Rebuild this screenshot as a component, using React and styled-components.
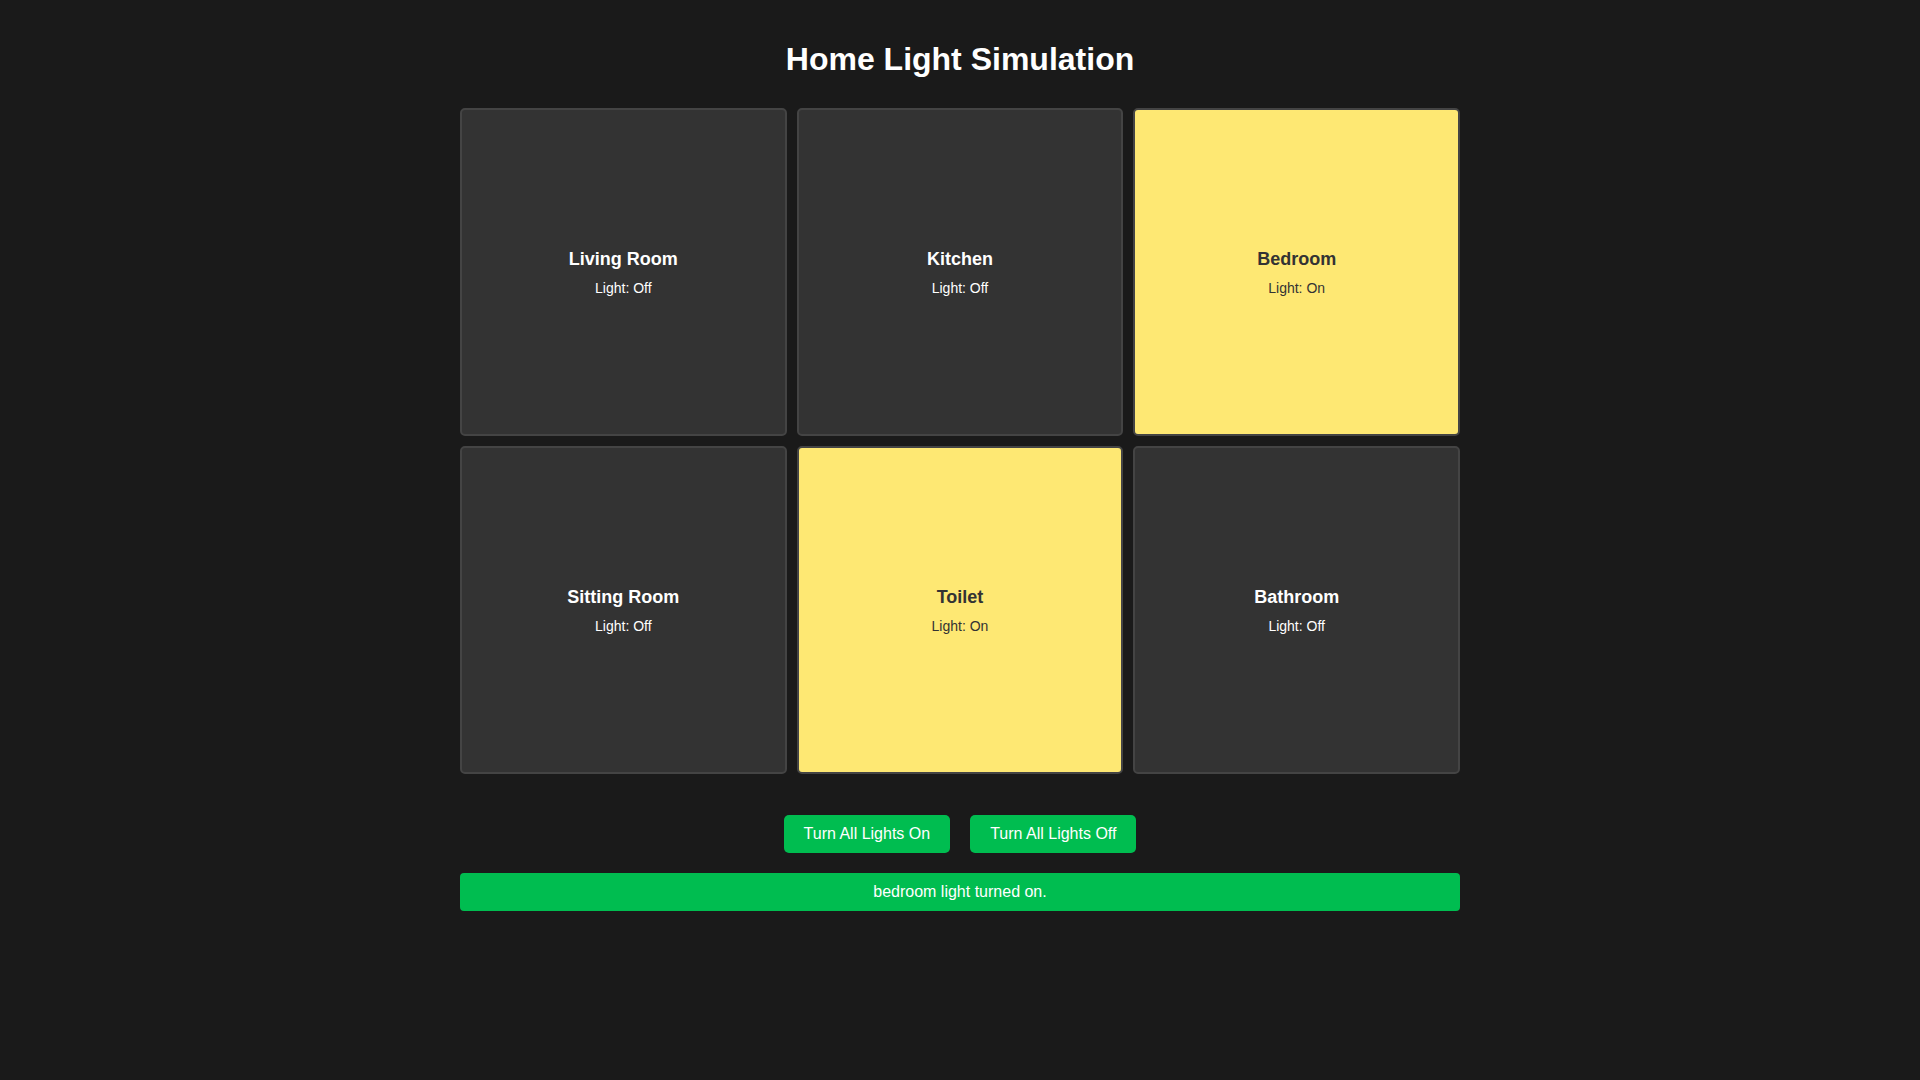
import React, { useState } from "react";
import styled, { createGlobalStyle } from "styled-components";

const GlobalStyle = createGlobalStyle`
  body {
    margin: 0;
    background-color: #1a1a1a;
    font-family: "Liberation Sans", Arial, sans-serif;
    color: #fff;
  }
`;

const Page = styled.div`
  display: flex;
  flex-direction: column;
  align-items: center;
  padding: 20px 0;
`;

const Title = styled.h1`
  font-size: 32px;
  font-weight: bold;
  margin: 21px 0 30px;
  color: #fff;
`;

const RoomGrid = styled.div`
  display: grid;
  grid-template-columns: repeat(3, 1fr);
  gap: 10px;
  width: 1000px;
`;

const RoomCard = styled.div`
  box-sizing: border-box;
  height: 328px;
  display: flex;
  flex-direction: column;
  align-items: center;
  justify-content: center;
  background-color: ${(props) => (props.$on ? "#fee873" : "#333333")};
  color: ${(props) => (props.$on ? "#333333" : "#ffffff")};
  border: 2px solid #444;
  border-radius: 5px;
  cursor: pointer;
`;

const RoomName = styled.h3`
  font-size: 18px;
  font-weight: bold;
  margin: 0;
`;

const RoomStatus = styled.p`
  font-size: 14px;
  margin: 10px 0 0;
`;

const Controls = styled.div`
  display: flex;
  gap: 20px;
  margin-top: 41px;
`;

const ControlButton = styled.button`
  background-color: #00bd50;
  color: #fff;
  border: none;
  border-radius: 5px;
  padding: 10px 20px;
  font-family: "Liberation Sans", Arial, sans-serif;
  font-size: 16px;
  cursor: pointer;
`;

const Message = styled.div`
  box-sizing: border-box;
  width: 1000px;
  margin-top: 20px;
  padding: 10px;
  background-color: #00bd50;
  color: #fff;
  border-radius: 4px;
  font-size: 16px;
  text-align: center;
`;

const initialRooms = [
  { id: "livingroom", name: "Living Room", on: false },
  { id: "kitchen", name: "Kitchen", on: false },
  { id: "bedroom", name: "Bedroom", on: true },
  { id: "sittingroom", name: "Sitting Room", on: false },
  { id: "toilet", name: "Toilet", on: true },
  { id: "bathroom", name: "Bathroom", on: false },
];

const App = () => {
  const [rooms, setRooms] = useState(initialRooms);
  const [message, setMessage] = useState("bedroom light turned on.");

  const toggleRoom = (id) => {
    setRooms(
      rooms.map((room) => {
        if (room.id !== id) return room;
        setMessage(`${room.id} light turned ${room.on ? "off" : "on"}.`);
        return { ...room, on: !room.on };
      })
    );
  };

  const setAll = (on) => {
    setRooms(rooms.map((room) => ({ ...room, on })));
    setMessage(`All lights turned ${on ? "on" : "off"}.`);
  };

  return (
    <>
      <GlobalStyle />
      <Page>
        <Title>Home Light Simulation</Title>
        <RoomGrid>
          {rooms.map((room) => (
            <RoomCard
              key={room.id}
              $on={room.on}
              onClick={() => toggleRoom(room.id)}
            >
              <RoomName>{room.name}</RoomName>
              <RoomStatus>Light: {room.on ? "On" : "Off"}</RoomStatus>
            </RoomCard>
          ))}
        </RoomGrid>
        <Controls>
          <ControlButton onClick={() => setAll(true)}>
            Turn All Lights On
          </ControlButton>
          <ControlButton onClick={() => setAll(false)}>
            Turn All Lights Off
          </ControlButton>
        </Controls>
        {message && <Message>{message}</Message>}
      </Page>
    </>
  );
};

export default App;
